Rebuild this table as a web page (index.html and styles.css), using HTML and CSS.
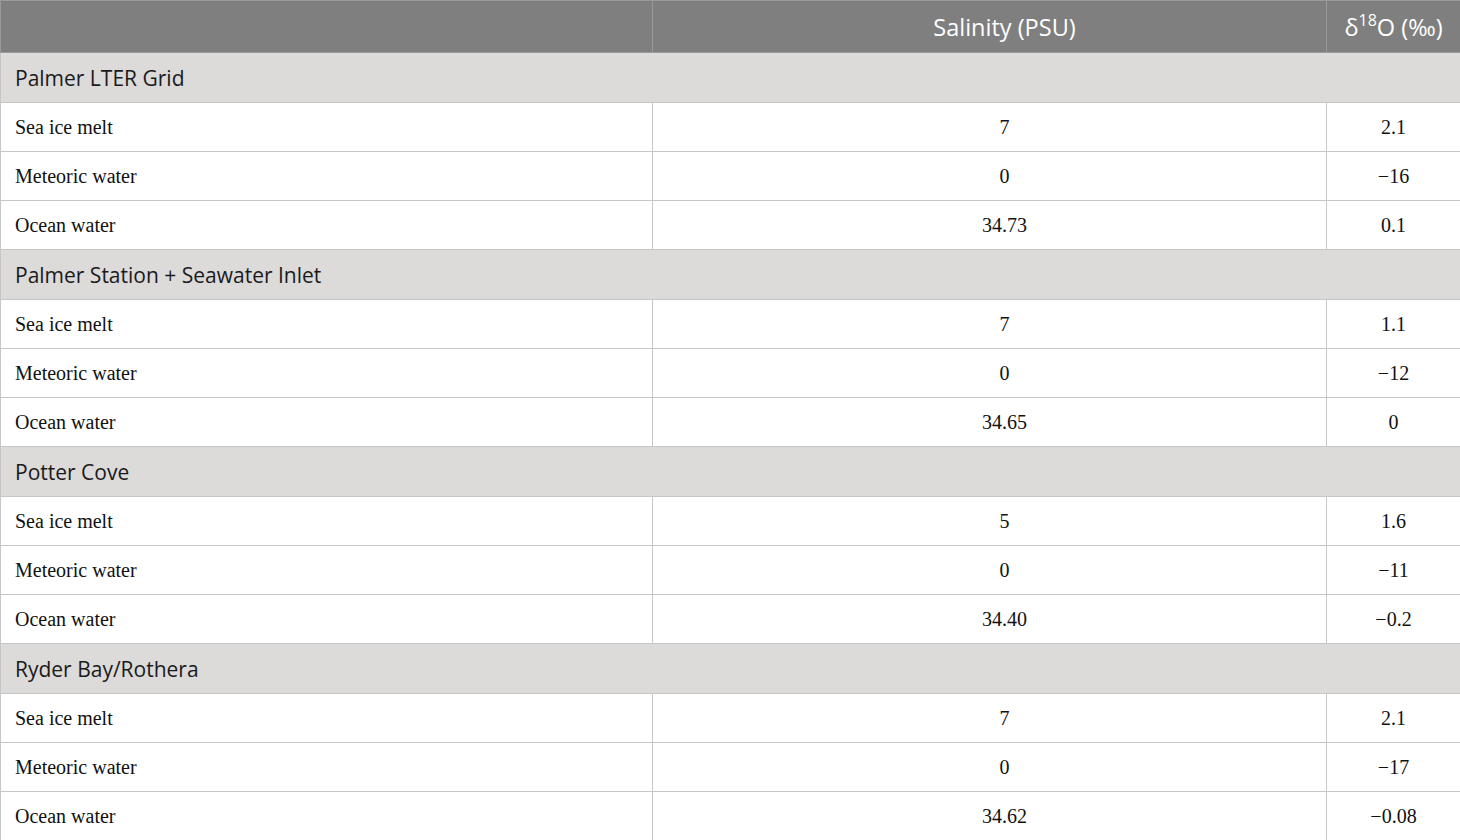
FILE: index.html
```html
<!DOCTYPE html>
<html>
<head>
<meta charset="utf-8">
<link rel="stylesheet" href="styles.css">
</head>
<body>
<table class="tbl">
  <colgroup>
    <col class="c1"><col class="c2"><col class="c3">
  </colgroup>
  <thead>
    <tr class="head">
      <th></th>
      <th class="mid">Salinity (PSU)</th>
      <th class="last">δ<sup>18</sup>O (‰)</th>
    </tr>
  </thead>
  <tbody>
    <tr class="sec"><td colspan="3">Palmer LTER Grid</td></tr>
    <tr class="row"><td>Sea ice melt</td><td class="mid">7</td><td class="last">2.1</td></tr>
    <tr class="row"><td>Meteoric water</td><td class="mid">0</td><td class="last">−16</td></tr>
    <tr class="row"><td>Ocean water</td><td class="mid">34.73</td><td class="last">0.1</td></tr>
    <tr class="sec"><td colspan="3">Palmer Station + Seawater Inlet</td></tr>
    <tr class="row"><td>Sea ice melt</td><td class="mid">7</td><td class="last">1.1</td></tr>
    <tr class="row"><td>Meteoric water</td><td class="mid">0</td><td class="last">−12</td></tr>
    <tr class="row"><td>Ocean water</td><td class="mid">34.65</td><td class="last">0</td></tr>
    <tr class="sec"><td colspan="3">Potter Cove</td></tr>
    <tr class="row"><td>Sea ice melt</td><td class="mid">5</td><td class="last">1.6</td></tr>
    <tr class="row"><td>Meteoric water</td><td class="mid">0</td><td class="last">−11</td></tr>
    <tr class="row"><td>Ocean water</td><td class="mid">34.40</td><td class="last">−0.2</td></tr>
    <tr class="sec"><td colspan="3">Ryder Bay/Rothera</td></tr>
    <tr class="row"><td>Sea ice melt</td><td class="mid">7</td><td class="last">2.1</td></tr>
    <tr class="row"><td>Meteoric water</td><td class="mid">0</td><td class="last">−17</td></tr>
    <tr class="row"><td>Ocean water</td><td class="mid">34.62</td><td class="last">−0.08</td></tr>
  </tbody>
</table>
</body>
</html>
```
FILE: styles.css
```css
html, body {
  margin: 0;
  padding: 0;
  background: #ffffff;
}
.tbl {
  width: 1460px;
  border-collapse: collapse;
  table-layout: fixed;
}
.c1 { width: 652px; }
.c2 { width: 674px; }
.c3 { width: 134px; }
.tbl th, .tbl td {
  border: 1px solid #c6c6c6;
  padding: 0 0 0 14px;
  vertical-align: middle;
}
.head th {
  height: 51px;
  background: #7f7f7f;
  color: #ffffff;
  font-family: "Open Sans", "Noto Sans", sans-serif;
  font-weight: 400;
  font-size: 23.5px;
  border-color: #9a9a9a;
}
.head sup {
  font-size: 16px;
  line-height: 0;
  vertical-align: 10px;
}
.sec td {
  height: 49px;
  background: #dcdbda;
  color: #1a1a1a;
  font-family: "Open Sans", "Noto Sans", sans-serif;
  font-size: 21px;
  text-align: left;
}
.row td {
  height: 48px;
  font-family: "Liberation Serif", "Times New Roman", serif;
  font-size: 20px;
  color: #111111;
}
.tbl .mid {
  text-align: center;
  padding: 0 0 0 30px;
}
.tbl .last {
  text-align: center;
  padding: 0;
}
```
